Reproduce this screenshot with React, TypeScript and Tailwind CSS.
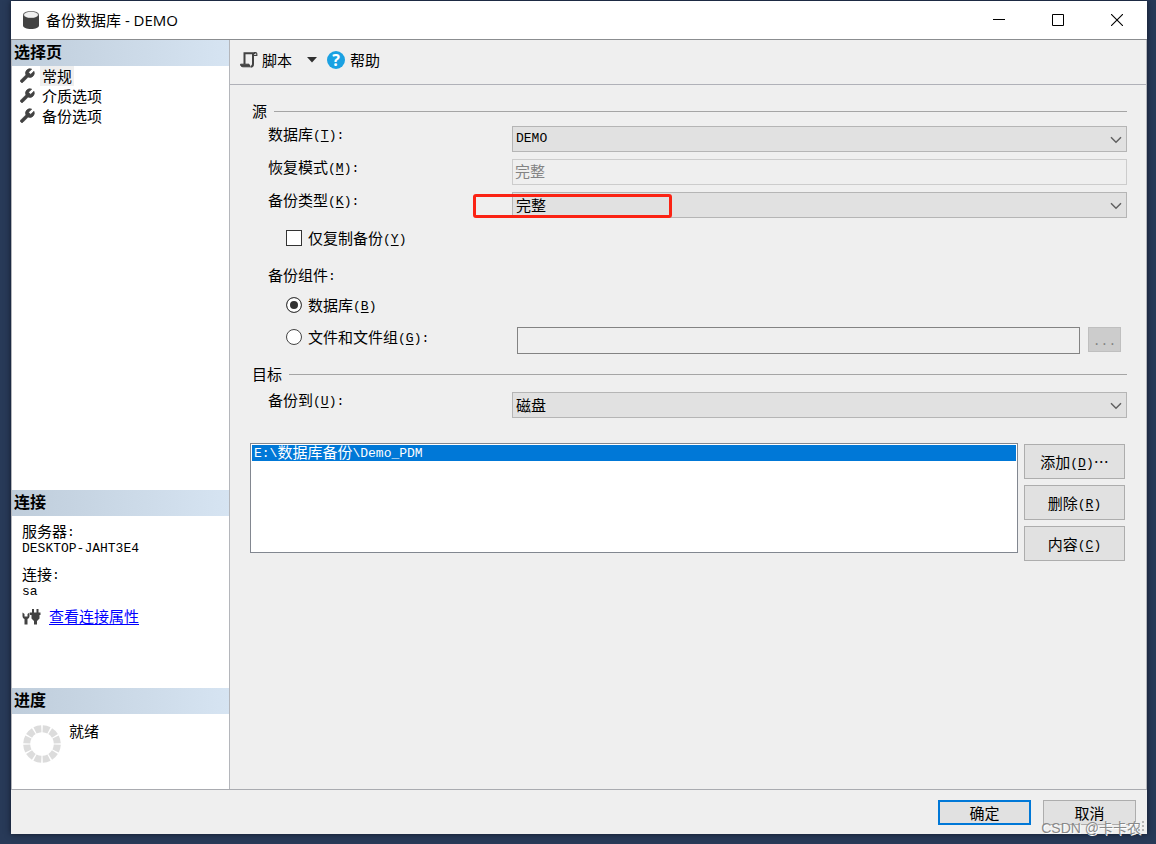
import { useState, type ReactNode } from "react";

/** Half-width Latin text set beside full-width Chinese glyphs. */
function Mono({ children }: { children: ReactNode }) {
  return (
    <span className="align-[1px] font-['Liberation_Mono',monospace] text-[13px] leading-none">{children}</span>
  );
}

/** Access key shown after a label, such as (T): */
function Key({ k, end = "" }: { k: string; end?: string }) {
  return (
    <Mono>
      (<u className="underline-offset-2">{k}</u>){end}
    </Mono>
  );
}

function WrenchIcon() {
  return (
    <svg className="size-4" viewBox="1 1 22 22" fill="#424242" stroke="#424242" strokeWidth="1">
      <path d="M14.700 6.300a1 1 0 0 0 0 1.400l1.600 1.600a1 1 0 0 0 1.400 0l3.770-3.770a6 6 0 0 1-7.940 7.940l-6.910 6.910a2.120 2.120 0 0 1-3-3l6.910-6.910a6 6 0 0 1 7.940-7.940l-3.760 3.760z" />
    </svg>
  );
}

function PaneHeader({ children }: { children: ReactNode }) {
  return (
    <h2 className="h-[26px] shrink-0 bg-linear-to-r from-[#bfcddb] to-[#d6e4f2] pl-[2px] text-base leading-[22px] font-bold">
      {children}
    </h2>
  );
}

function GroupTitle({ children }: { children: ReactNode }) {
  return (
    <div className="flex h-[26px] items-center gap-[7px] pl-[2px]">
      <span>{children}</span>
      <span className="h-px flex-1 bg-[#a5a5a5]" />
    </div>
  );
}

function Drop({ id, options, mono = false }: { id: string; options: string[]; mono?: boolean }) {
  return (
    <div className="relative flex-1">
      <select
        id={id}
        className={
          "block h-[26px] w-full appearance-none rounded-none border border-[#b5b5b5] bg-[#e1e1e1] pl-[3px] outline-none " +
          (mono ? "font-['Liberation_Mono',monospace] text-[13px]" : "")
        }
      >
        {options.map((o) => (
          <option key={o}>{o}</option>
        ))}
      </select>
      <svg
        className="pointer-events-none absolute top-[10px] right-[5px] h-2 w-3"
        viewBox="0 0 12 8"
        fill="none"
        stroke="#606060"
        strokeWidth="1.5"
      >
        <path d="M1 1.2 6 6.2 11 1.2" />
      </svg>
    </div>
  );
}

function SideButton({ children }: { children: ReactNode }) {
  return (
    <button className="h-[35px] border border-[#adadad] bg-[#e1e1e1] text-center">{children}</button>
  );
}

const pages = ["常规", "介质选项", "备份选项"];
const labelClass = "w-[262px] shrink-0 pl-[18px] leading-4";
const radioClass =
  "size-4 appearance-none rounded-full border border-[#444444] bg-white checked:bg-[#333333] checked:shadow-[inset_0_0_0_3px_white]";

export default function App() {
  const [page, setPage] = useState(pages[0]);
  const [part, setPart] = useState("db");

  return (
    <div className="flex min-h-screen flex-col bg-[#283a58] pt-px pr-[9px] pb-[10px] pl-[11px] font-['Noto_Sans_CJK_SC',sans-serif] text-[15px] leading-5 text-black">
      <div className="flex flex-1 flex-col bg-[#efefef] shadow-[0_0_6px_#10182a]">
        <header className="flex h-[39px] items-center border-b border-[#8b8d90] bg-white pb-px pl-3">
          <svg className="h-[18px] w-4" viewBox="0 0 16 18">
            <path d="M0 3.500v11C0 16.500 3.500 18 8 18s8-1.500 8-3.500v-11z" fill="#424242" />
            <ellipse cx="8" cy="3.500" rx="8" ry="3.500" fill="#6a6a6a" />
            <ellipse cx="8" cy="3.800" rx="7" ry="3" fill="#efefef" />
          </svg>
          <h1 className="flex-1 pl-[7px] font-['Open_Sans','Noto_Sans_CJK_SC',sans-serif] text-[15px]">
            备份数据库 - DEMO
          </h1>
          <div className="flex gap-[13px] pr-[7px]">
            <button aria-label="最小化" className="flex h-9 w-[46px] items-center justify-center">
              <svg className="size-3" viewBox="0 0 12 12" stroke="black">
                <path d="M0 5.500h12" />
              </svg>
            </button>
            <button aria-label="最大化" className="flex h-9 w-[46px] items-center justify-center">
              <svg className="size-3" viewBox="0 0 12 12" stroke="black" fill="none">
                <path d="M.5.5h11v11H.5z" />
              </svg>
            </button>
            <button aria-label="关闭" className="flex h-9 w-[46px] items-center justify-center">
              <svg className="size-3" viewBox="0 0 12 12" stroke="black" strokeWidth="1.100">
                <path d="M0 0l12 12M12 0 0 12" />
              </svg>
            </button>
          </div>
        </header>

        <div className="flex flex-1 border-b border-[#a9abb0]">
          <aside className="flex w-[219px] shrink-0 flex-col border-x border-[#b4b6bb] bg-white">
            <PaneHeader>选择页</PaneHeader>
            <nav className="flex flex-1 flex-col items-start pl-[7px]">
              {pages.map((p) => (
                <button key={p} onClick={() => setPage(p)} className="flex h-5 items-center gap-[5px]">
                  <WrenchIcon />
                  <span className={p === page ? "bg-[#efefef] px-[2px]" : "px-[2px]"}>{p}</span>
                </button>
              ))}
            </nav>

            <section className="flex h-[198px] flex-col">
              <PaneHeader>连接</PaneHeader>
              <div className="px-[10px] pt-[7px]">
                <p className="leading-4">
                  服务器<Mono>:</Mono>
                </p>
                <p className="flex h-[18px] items-center">
                  <Mono>DESKTOP-JAHT3E4</Mono>
                </p>
                <p className="mt-[9px] leading-4">
                  连接<Mono>:</Mono>
                </p>
                <p className="flex h-[18px] items-center">
                  <Mono>sa</Mono>
                </p>
                <div className="mt-[6px] flex items-center gap-2">
                  <svg className="h-5 w-[19px]" viewBox="0 0 19 20" fill="#424242">
                    <path d="M.5 6.500V10c0 1.500.8 2.500 2 3v5.500h3V13c1.200-.5 2-1.500 2-3V6.500L5.500 8v2.500h-3V8z" />
                    <path d="M10 3h2v3.500h2.500V3h2v3.500h2V9h-1v3.500L15 15v3.500h-3V15l-2.500-2.500V9H8V6.500h2z" />
                  </svg>
                  <a href="#properties" className="text-[#0000ff] underline underline-offset-2">
                    查看连接属性
                  </a>
                </div>
              </div>
            </section>

            <section className="flex h-[101px] flex-col">
              <PaneHeader>进度</PaneHeader>
              <div className="flex gap-2 pt-[7px] pl-[11px]">
                <svg className="mt-1 size-[38px]" viewBox="0 0 38 38" fill="none">
                  <circle
                    cx="19"
                    cy="19"
                    r="15.300"
                    stroke="#dcdcdc"
                    strokeWidth="7"
                    pathLength="120"
                    strokeDasharray="8.200 1.800"
                    strokeDashoffset="-0.900"
                  />
                </svg>
                <span>就绪</span>
              </div>
            </section>
          </aside>

          <main className="flex flex-1 flex-col border-r border-[#b4b6bb]">
            <div className="flex h-[45px] items-center border-b border-[#b0b1b8] pb-1 pl-[10px]">
              <button className="flex items-center gap-1">
                <svg className="h-[18px] w-[18px]" viewBox="0 0 18 18" fill="none" stroke="#424242">
                  <path d="M4.500 13V2.200h11" strokeWidth="2" />
                  <path d="M14 1.500h1.500c.8 0 1.300.5 1.300 1.300v1.700h-3.500" strokeWidth="1.200" />
                  <path d="M13 2.500V13c0 1.800-.8 2.800-2.500 2.800" strokeWidth="2" />
                  <path d="M.5 13.200h8.500l1 2.600H3c-1.500 0-2.500-1-2.500-2.600z" fill="#424242" strokeWidth="1" />
                </svg>
                <span>脚本</span>
                <svg className="ml-[11px] h-[6px] w-[10px]" viewBox="0 0 10 6" fill="#303030">
                  <path d="M0 0h10L5 5.500z" />
                </svg>
              </button>
              <button className="ml-[10px] flex items-center gap-[5px]">
                <span className="flex size-[18px] items-center justify-center rounded-full bg-[#1ba1e2] font-['Open_Sans',sans-serif] text-base font-bold text-white">
                  ?
                </span>
                <span>帮助</span>
              </button>
            </div>

            <form className="flex flex-col pt-[13px] pr-[19px] pl-5" onSubmit={(e) => e.preventDefault()}>
              <GroupTitle>源</GroupTitle>
              <div className="mt-[2px] flex flex-col gap-[7px]">
                <div className="flex">
                  <label htmlFor="database" className={labelClass}>
                    数据库<Key k="T" end=":" />
                  </label>
                  <Drop id="database" options={["DEMO"]} mono />
                </div>
                <div className="flex">
                  <label htmlFor="model" className={labelClass}>
                    恢复模式<Key k="M" end=":" />
                  </label>
                  <input
                    id="model"
                    disabled
                    defaultValue="完整"
                    className="h-[26px] min-w-0 flex-1 border border-[#cccccc] bg-[#efefef] pb-1 pl-[2px] text-[#838383]"
                  />
                </div>
                <div className="relative flex">
                  <label htmlFor="type" className={labelClass}>
                    备份类型<Key k="K" end=":" />
                  </label>
                  <Drop id="type" options={["完整"]} />
                  <span className="pointer-events-none absolute top-[2px] left-[223px] h-6 w-[199px] rounded-[3px] border-3 border-[#fb2314]" />
                </div>
              </div>

              <label className="mt-[10px] flex h-5 items-center gap-[6px] pl-9">
                <input
                  type="checkbox"
                  className="size-4 appearance-none border border-[#333333] bg-white checked:bg-[#333333]"
                />
                <span>
                  仅复制备份<Key k="Y" />
                </span>
              </label>

              <fieldset className="mt-[17px]">
                <legend className="h-5 pl-[18px]">
                  备份组件<Mono>:</Mono>
                </legend>
                <label className="mt-[10px] flex h-5 items-center gap-[6px] pl-9">
                  <input
                    type="radio"
                    name="part"
                    checked={part === "db"}
                    onChange={() => setPart("db")}
                    className={radioClass}
                  />
                  <span>
                    数据库<Key k="B" />
                  </span>
                </label>
                <div className="mt-3 flex items-start pr-[6px]">
                  <label className="flex h-5 w-[267px] shrink-0 items-center gap-[6px] pl-9">
                    <input
                      type="radio"
                      name="part"
                      checked={part === "files"}
                      onChange={() => setPart("files")}
                      className={radioClass}
                    />
                    <span>
                      文件和文件组<Key k="G" end=":" />
                    </span>
                  </label>
                  <input
                    aria-label="文件和文件组"
                    readOnly
                    className="h-[27px] min-w-0 flex-1 border border-[#838383] bg-[#efefef]"
                  />
                  <button
                    aria-label="浏览"
                    disabled
                    className="ml-2 h-[25px] w-[33px] border border-[#bfbfbf] bg-[#cccccc] text-[#838383]"
                  >
                    <Mono>...</Mono>
                  </button>
                </div>
              </fieldset>

              <div className="mt-[7px]">
                <GroupTitle>目标</GroupTitle>
              </div>
              <div className="mt-[5px] flex">
                <label htmlFor="target" className={labelClass}>
                  备份到<Key k="U" end=":" />
                </label>
                <Drop id="target" options={["磁盘"]} />
              </div>

              <div className="mt-[25px] flex gap-[6px] pr-[2px]">
                <ul role="listbox" aria-label="目标文件" className="h-[110px] flex-1 border border-[#828790] bg-white p-px">
                  <li role="option" aria-selected="true" className="h-4 bg-[#0078d7] pl-[2px] leading-[14px] text-white">
                    <Mono>E:\</Mono>数据库备份<Mono>\Demo_PDM</Mono>
                  </li>
                </ul>
                <div className="flex w-[101px] flex-col gap-[6px] pt-px">
                  <SideButton>
                    添加<Key k="D" />…
                  </SideButton>
                  <SideButton>
                    删除<Key k="R" />
                  </SideButton>
                  <SideButton>
                    内容<Key k="C" />
                  </SideButton>
                </div>
              </div>
            </form>
          </main>
        </div>

        <footer className="relative flex h-11 items-start justify-end gap-3 pt-[10px] pr-[11px]">
          <button className="h-[25px] w-[93px] border-2 border-[#0078d7] bg-[#e1e1e1]">确定</button>
          <button className="h-[25px] w-[93px] border border-[#adadad] bg-[#e1e1e1]">取消</button>
          <span className="pointer-events-none absolute right-[6px] bottom-[-4px] font-['Liberation_Sans','Noto_Sans_CJK_SC',sans-serif] text-sm whitespace-nowrap text-[#8a8a8a] [text-shadow:1px_1px_0_white]">
            CSDN @卡卡农
          </span>
          <svg className="absolute right-[2px] bottom-[2px] size-[11px]" viewBox="0 0 11 11" fill="#b5b5b5">
            <path d="M8 0h2v2H8zM4 4h2v2H4zM8 4h2v2H8zM0 8h2v2H0zM4 8h2v2H4zM8 8h2v2H8z" />
          </svg>
        </footer>
      </div>
    </div>
  );
}
